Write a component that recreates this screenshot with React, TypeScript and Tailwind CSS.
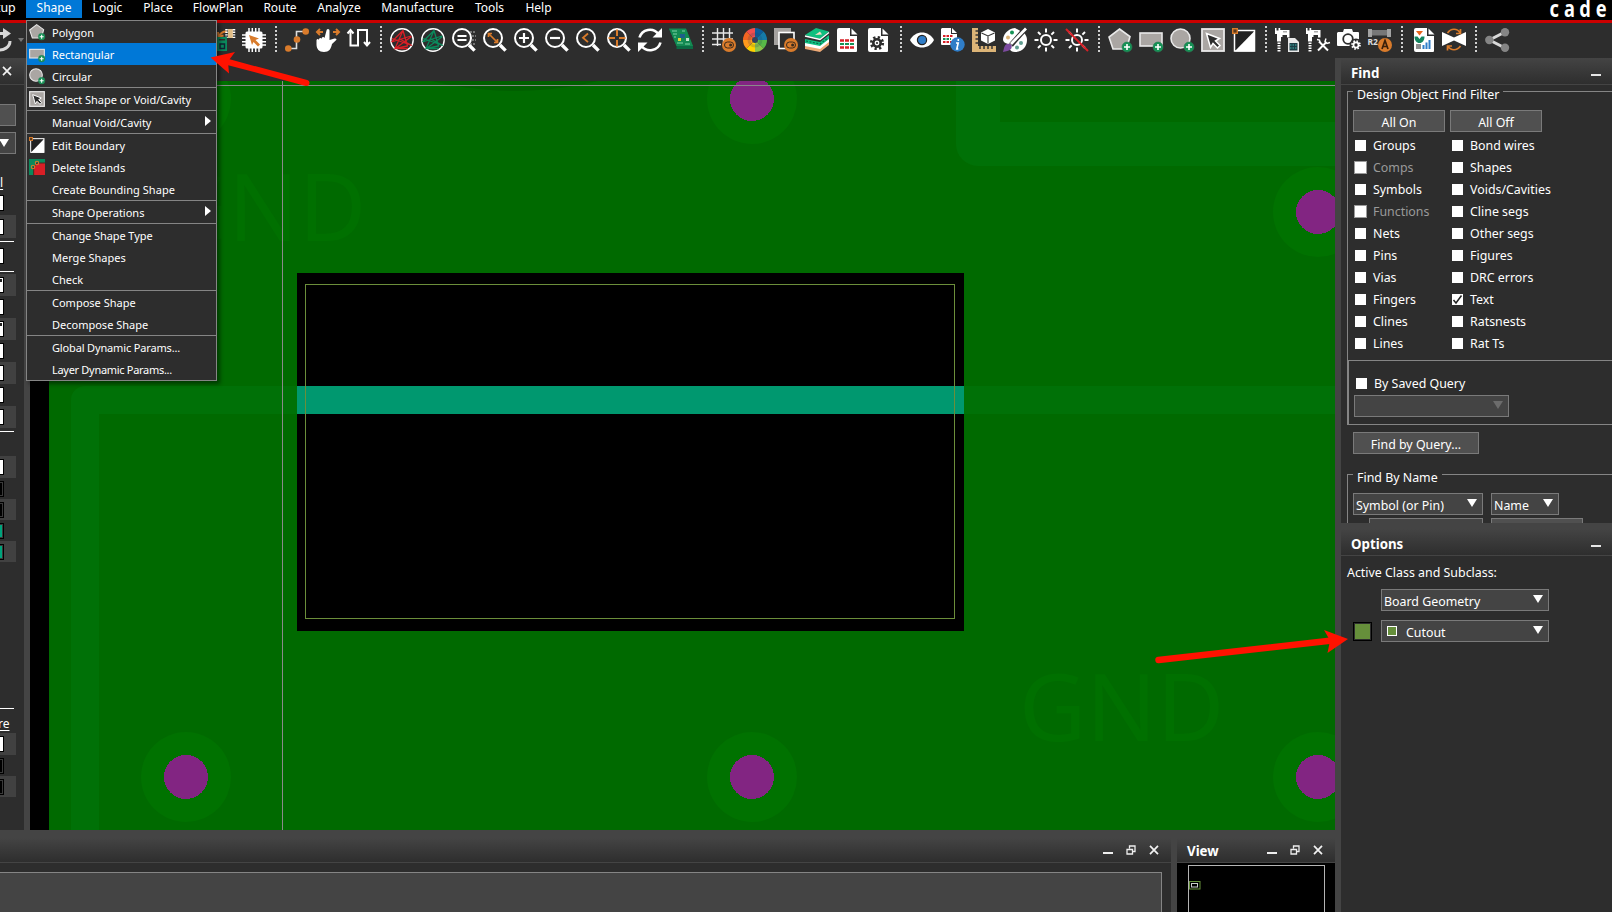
import type { ReactNode } from "react";

/* ---------- toolbar drawings, all on a 24 x 24 grid ---------- */

const Plus = () => (
  <g>
    <circle cx="19" cy="19" r="5" fill="#149255" stroke="#2d7a55" strokeWidth="0.6" />
    <path d="M19 16v6M16 19h6" stroke="#fff" strokeWidth="1.6" fill="none" />
  </g>
);

const Lens = ({ children }: { children?: ReactNode }) => (
  <g fill="none">
    <circle cx="10" cy="10" r="9" stroke="#fff" strokeWidth="2" />
    <path d="M17 17l5.6 5.6" stroke="#fff" strokeWidth="3.4" />
    {children}
  </g>
);

const Ratsnest = ({ color }: { color: string }) => (
  <g fill="none">
    <circle cx="12" cy="12" r="11.2" stroke="#fff" strokeWidth="1.4" />
    <path d="M1.5 14L13 2.5 17.5 18 5 20.5 13 2.5M2 10.5l20 7M1.5 14L21 8M6 20L21.5 8.5M9 10.5l12 6.5M5 20.5h13" stroke={color} strokeWidth="1.3" />
  </g>
);

const Sun = () => (
  <g fill="none" stroke="#fff" strokeWidth="2">
    <circle cx="12" cy="12" r="5" />
    <path d="M12 .5v4M12 19.5v4M.5 12h4M19.5 12h4M4 4l2.6 2.6M17.4 17.4L20 20M4 20l2.6-2.6M17.4 6.6L20 4" />
  </g>
);

const Toggle = () => (
  <g>
    <circle cx="17" cy="17" r="7" fill="#d97b2b" />
    <rect x="12.5" y="14" width="9" height="6" rx="3" fill="none" stroke="#3a2a1c" strokeWidth="1" />
    <circle cx="18.6" cy="17" r="1.5" fill="#3a2a1c" />
  </g>
);

const Page = () => (
  <g>
    <path d="M3 0h11v8h7v15a1 1 0 0 1-1 1H3a2 2 0 0 1-2-2V2a2 2 0 0 1 2-2z" fill="#fff" />
    <path d="M15.500 0.5v6h6z" fill="#fff" />
  </g>
);

const Caliper = () => (
  <g>
    <path d="M0 0h1.500v2.500h2V0h1.700v2h9.300v7.500H12V7H7.500v2H6v4.500H2V6H0z" fill="#fff" />
    <path d="M4 14.500v9.500" stroke="#fff" strokeWidth="3" strokeDasharray="1.500 1" />
    <path d="M9 3v1.500M11 3v1.500" stroke="#555" strokeWidth="1" />
  </g>
);

const Cog = ({ x, y, s, color, hole }: { x: number; y: number; s: number; color: string; hole: string }) => (
  <g transform={`translate(${x} ${y}) scale(${s})`}>
    <circle r="5.600" fill="none" stroke={color} strokeWidth="3" strokeDasharray="2.2 2.2" />
    <circle r="5" fill={color} />
    <circle r="2.400" fill={hole} />
  </g>
);

const polygonIcon = (
  <g>
    <path d="M11.500 1L22 8.500 18.500 21H5L1 9z" fill="#aaa6a3" stroke="#e9e9e9" strokeWidth="1.600" />
    <Plus />
  </g>
);
const rectIcon = (
  <g>
    <rect x="1" y="5" width="22" height="13" fill="#aaa6a3" stroke="#e9e9e9" strokeWidth="1.600" />
    <Plus />
  </g>
);
const circleIcon = (
  <g>
    <circle cx="10.500" cy="10.500" r="9.500" fill="#aaa6a3" stroke="#e9e9e9" strokeWidth="1.600" />
    <Plus />
  </g>
);
const selectIcon = (
  <g>
    <rect x="1" y="1" width="22" height="22" fill="#aaa6a3" stroke="#e9e9e9" strokeWidth="1.800" />
    <path d="M5.500 5.500l13 5-4 2.500 4.500 4.500-2.500 2.500-4.500-4.500-2.500 4z" fill="#2d2d2d" stroke="#fff" strokeWidth="1.500" />
  </g>
);
const boundaryIcon = (
  <g>
    <rect x="2.500" y="2.500" width="20" height="20.500" fill="#222" stroke="#fff" strokeWidth="1.500" />
    <path d="M22.500 3v20.500H2.500z" fill="#fff" />
    <rect x="0.700" y="0.700" width="4.600" height="4.600" fill="#5a3a1c" stroke="#d97b2b" strokeWidth="1.400" />
  </g>
);
const islandIcon = (
  <g>
    <rect width="24" height="24" fill="#0a8a5c" />
    <path d="M7 24V12l5-6h12v18z" fill="#d81f26" />
    <path d="M7 24V12l5-6h12" fill="none" stroke="#4a2a20" strokeWidth="1.500" />
    <circle cx="6" cy="12" r="2.600" fill="none" stroke="#d97b2b" strokeWidth="1.600" />
    <circle cx="12" cy="6" r="2.600" fill="none" stroke="#d97b2b" strokeWidth="1.600" />
  </g>
);

const icons: (ReactNode | null)[] = [
  <g>
    <path d="M16 3.500c-4-.5-6 1-7.500 4M7 4l.5 4.500 5-1" fill="none" stroke="#d97b2b" strokeWidth="2" />
    <rect x="17" y="1" width="5" height="9" fill="#e0bd88" />
    <path d="M15.500 1v9M23 1v9" stroke="#fff" strokeWidth="2.500" strokeDasharray="1.400 1.200" />
    <path d="M7 13.500V10h8v3.500" fill="none" stroke="#0a8a5c" strokeWidth="1.800" />
    <rect x="5" y="12.500" width="11" height="10.500" fill="#0a8a5c" />
    <path d="M9 20.500v-4.500h4.500v4.500z" fill="none" stroke="#123" strokeWidth="1.400" />
  </g>,
  <g>
    <rect x="3.500" y="3.500" width="17" height="17" rx="1.500" fill="#fff" />
    <path d="M7 0v24M10.300 0v24M13.700 0v24M17 0v24M0 7h24M0 10.300h24M0 13.700h24M0 17h24" stroke="#fff" strokeWidth="1.500" />
    <path d="M7 7l10 3.500-3.500 1.500 4.500 4.500-2 2-4.500-4.500L10 17z" fill="#d97b2b" />
  </g>,
  null,
  <g>
    <path d="M3 20.500h8.500v-17H21" fill="none" stroke="#ddd" strokeWidth="1.600" />
    <circle cx="3.300" cy="20.500" r="3.300" fill="#d97b2b" />
    <circle cx="12" cy="11.500" r="3.300" fill="#d97b2b" />
    <circle cx="20.700" cy="3.500" r="3.300" fill="#d97b2b" />
  </g>,
  <g>
    <path d="M4 1L1 4l3 3M1 4h6M20 1l3 3-3 3M23 4h-6" fill="none" stroke="#d97b2b" strokeWidth="2" />
    <path d="M10.500 2.500a1.500 1.500 0 0 1 3 0V12l5-1.500c2-.4 2.500 1 1.500 1.800L16 16c-1 5-3 8-8 8-5 0-7.500-3-7.500-7.500V12c.5-1.500 2-1.500 2.500 0V11c.5-1.500 2.300-1.500 2.700 0V10c.6-1.500 2.300-1.500 2.800 0z" fill="#fff" />
  </g>,
  <g fill="none" stroke="#fff" strokeWidth="2">
    <path d="M3.500 3v14.500H11V2h9v15" />
    <path d="M.5 5.500l3-3.500 3 3.500M17 14l3 3.500 3-3.500" />
  </g>,
  null,
  <Ratsnest color="#d81f26" />,
  <Ratsnest color="#0a8a5c" />,
  <Lens>
    <path d="M5.500 8h9M5.500 12h9" stroke="#fff" strokeWidth="2" />
    <path d="M18 4h6M20 8h4M20 12h4M18 16h6" stroke="#bbb" strokeWidth="1.200" strokeDasharray="2 1" />
  </Lens>,
  <Lens>
    <path d="M5.500 9V5.500H9M5.500 5.500l9 9M14.500 11v3.500H11" stroke="#d97b2b" strokeWidth="1.700" />
  </Lens>,
  <Lens>
    <path d="M5 10h10M10 5v10" stroke="#fff" strokeWidth="2.200" />
  </Lens>,
  <Lens>
    <path d="M5 10h10" stroke="#fff" strokeWidth="2.200" />
  </Lens>,
  <Lens>
    <path d="M12 5.500L7 9.800l5 4.300" stroke="#d97b2b" strokeWidth="1.800" />
  </Lens>,
  <Lens>
    <path d="M10 1.500v6.500M10 12v6.500M1.500 10H8M12 10h6.500" stroke="#d97b2b" strokeWidth="2" />
  </Lens>,
  <g fill="none" stroke="#fff" strokeWidth="2.600">
    <path d="M1.500 9.500C4 1 15 -1 20.500 6M22.500 14.500C20 23 9 25 3.500 18" />
    <path d="M24 0v9.500h-9.500zM0 24v-9.500h9.500z" fill="#fff" stroke="none" />
  </g>,
  <g>
    <path d="M0 1h17l7 17.500v2.500H7.500V18z" fill="#0b6b43" />
    <path d="M0 .5h17l7 17.500H7.500z" fill="#138a52" />
    <path d="M3 3h5M4 6h4M13 3h3M8 15h6M16 16h5M5 9h2" stroke="#7fd3a6" strokeWidth="1.200" />
    <rect x="11" y="6" width="5" height="4" fill="#1d5f8a" />
    <rect x="9" y="10" width="3" height="3" fill="#e2d23a" />
    <rect x="17" y="10" width="3" height="3" fill="#bfe3c9" />
  </g>,
  null,
  <g>
    <path d="M5.500 0v18M11.500 0v18M17.500 0v10M0 5h21M0 11h21M0 16.500h9" stroke="#e8e8e8" strokeWidth="1.400" />
    <Toggle />
  </g>,
  <g strokeWidth="12" fill="none">
    {["#0a5c9c", "#157aa8", "#58b947", "#8bc34a", "#ffd200", "#ff9a1c", "#f26522", "#f04e4e"].map((c, i) => (
      <path key={c} d="M12 12L12 0A12 12 0 0 1 20.500 3.500z" fill={c} stroke="none" transform={`rotate(${i * 45} 12 12)`} />
    ))}
    <circle cx="12" cy="12" r="6" fill="none" stroke="#24405f" strokeOpacity="0.2" strokeWidth="3" />
    <circle cx="12" cy="12" r="3" fill="#33415a" />
  </g>,
  <g>
    <rect width="17" height="17" fill="#a5a2a0" />
    <rect x="5" y="4.500" width="15" height="16" fill="#2d2d2d" stroke="#fff" strokeWidth="1.600" />
    <Toggle />
  </g>,
  <g>
    <path d="M0 17L15 19 24 13v4l-9 7-15-3z" fill="#eda976" />
    <path d="M0 14l15 3 9-7v4l-9 7-15-3z" fill="#fff" />
    <path d="M0 11l15 3 9-7v4l-9 7-15-3z" fill="#12c184" />
    <path d="M1 13l14 3 8-6" fill="none" stroke="#0a6b48" strokeWidth="1.200" strokeDasharray="2 1.500" />
    <path d="M0 7L11 0l13 3.500-9 7.500z" fill="#0fbf7f" />
    <path d="M10 7l5-3.500 2 3z" fill="#f3d9c0" />
    <path d="M0 8l15 3.500L24 4.500" fill="none" stroke="#fff" strokeWidth="1.300" />
  </g>,
  <g>
    <Page />
    <path d="M4 12.500h14M4 19.500h14" stroke="#d81f26" strokeWidth="2.400" strokeDasharray="4 1" />
    <path d="M4 16h14" stroke="#149255" strokeWidth="2.200" strokeDasharray="4 1" />
  </g>,
  <g>
    <Page />
    <Cog x={10} y={15} s={1} color="#2d2d2d" hole="#fff" />
    <circle cx="10" cy="15" r="1.100" fill="#2d2d2d" />
  </g>,
  null,
  <g>
    <path d="M0 12C5 2 19 2 24 12 19 22 5 22 0 12z" fill="#fff" />
    <circle cx="12" cy="12" r="4.600" fill="#2f7dc8" stroke="#222" strokeWidth="1.200" />
  </g>,
  <g>
    <path d="M1 0h9v6h6v11H1a1 1 0 0 1-1-1V1z M11 0l5 5h-5z" fill="#fff" />
    <path d="M2 8h10M2 14h10" stroke="#d81f26" strokeWidth="1.800" strokeDasharray="2.500 1" />
    <path d="M2 11h8" stroke="#149255" strokeWidth="1.800" strokeDasharray="2.500 1" />
    <circle cx="16.500" cy="16.500" r="7.200" fill="#2f7dc8" />
    <path d="M15 15h2.200l-1.400 6h1.500M17.300 11v2" stroke="#fff" strokeWidth="1.600" fill="none" />
  </g>,
  <g>
    <path d="M0 0h6v18h18v6H0z" fill="#dcb477" />
    <path d="M3.500 3h2.500M3.500 7h2.500M3.500 11h2.500M3.500 15h2.500M8 18v3M12 18v3M16 18v3M20 18v3" stroke="#333" strokeWidth="1.500" />
    <path d="M16 1l7 3.500v8L16 16l-7-3.500v-8z" fill="#fff" />
    <path d="M9.500 5L16 8l6.500-3M16 8v7.500" stroke="#333" strokeWidth="1.100" fill="none" />
  </g>,
  <g>
    <path d="M12 0C4 1 0 7 0 12c1 4 5 3 6 5 1 3 0 7 6 7 8 0 12-6 12-12 0-3-1-5-3-7z" fill="#fff" />
    <circle cx="9" cy="4.500" r="2" fill="#149255" />
    <circle cx="5" cy="9.500" r="2" fill="#dcb477" />
    <circle cx="18" cy="15" r="2" fill="#5e9c8f" />
    <circle cx="14" cy="19.500" r="2" fill="#5e9c8f" />
    <path d="M23 0L8 17" stroke="#2d2d2d" strokeWidth="5" />
    <path d="M23 .5L8 16" stroke="#fff" strokeWidth="2.800" />
    <path d="M4 16c4-1 6 2 4 5-2 2-5 2-8 3 1-3 1-7 4-8z" fill="#7c4ba0" />
  </g>,
  <Sun />,
  <g>
    <Sun />
    <path d="M1 1l22 22" stroke="#d81f26" strokeWidth="2" />
  </g>,
  null,
  polygonIcon,
  rectIcon,
  circleIcon,
  selectIcon,
  boundaryIcon,
  null,
  <g>
    <Caliper />
    <path d="M13 10h7l4 4v10H13z" fill="#e9e9e9" />
    <rect x="14.500" y="15" width="8" height="7.500" fill="#1c3c44" />
    <path d="M15 17h7M15 20h7" stroke="#3fb0a8" strokeWidth="1" strokeDasharray="1.500 1" />
  </g>,
  <g>
    <Caliper />
    <path d="M13 13.500l9 9M20.500 14L12 22.500" stroke="#fff" strokeWidth="2" />
    <path d="M20 10.500l-1 3 2 2 3-1M11 11.500l2.500.5.500 2.500" fill="none" stroke="#fff" strokeWidth="1.400" />
  </g>,
  <g>
    <path d="M1 4h5l1-3h8l1 3h5a1 1 0 0 1 1 1v13H1a1 1 0 0 1-1-1V5z" fill="#fff" />
    <circle cx="11" cy="11" r="4.800" fill="#fff" stroke="#2d2d2d" strokeWidth="1.800" />
    <circle cx="19" cy="17" r="6.500" fill="#2d2d2d" />
    <Cog x={19} y={17} s={0.68} color="#fff" hole="#2d2d2d" />
  </g>,
  <g>
    <rect x="4" y="2" width="15" height="5.500" fill="#777" />
    <path d="M0 1h4v8H0zM19 1h4v8h-4z" fill="#a3a3a3" />
    <text x="-0.500" y="17" fill="#ddd" fontSize="8.500" fontWeight="700" fontFamily="Noto Sans">R2</text>
    <circle cx="17" cy="17" r="7" fill="#d97b2b" />
    <path d="M14 21l3-8.500 3 8.500M15 18.500h4" fill="none" stroke="#3a1f0a" strokeWidth="1.700" />
  </g>,
  null,
  <g transform="translate(2 0)">
    <Page />
    <path d="M3 3h7l-3.500 4.500z" fill="#e8641b" />
    <path d="M1.500 8.500h3l2 2.500 2-2.500h3c0 4-2 6.500-5 6.500s-5-2.500-5-6.500z" fill="#14855f" />
    <rect x="3" y="16" width="5" height="5" fill="#8d8d8d" />
    <path d="M10.500 21v-4M13.500 21v-6.500M16.500 21v-9" stroke="#2f7dc8" strokeWidth="2" />
  </g>,
  <g>
    <path d="M0 4l12 5.500L24 4v14l-12-5.500L0 18z" fill="#fff" />
    <path d="M5.500 5C9 0 15 0 18.500 5M18.500 1v4.500h-4.500M18.500 18c-3.500 5-9.500 5-13 0M5.500 22.500V18H10" fill="none" stroke="#d97b2b" strokeWidth="1.700" />
  </g>,
  null,
  <g>
    <path d="M20 4L4.500 12 20 20" fill="none" stroke="#d9d9d9" strokeWidth="3" />
    <circle cx="4.300" cy="12" r="4.200" fill="#858585" />
    <circle cx="20" cy="4.200" r="4.200" fill="#858585" />
    <circle cx="20" cy="19.800" r="4.200" fill="#858585" />
  </g>,
];

const Icon = ({ children, className = "size-6" }: { children: ReactNode; className?: string }) => (
  <svg viewBox="0 0 24 24" className={`${className} block shrink-0 overflow-visible`}>
    {children}
  </svg>
);

const Toolbar = () => (
  <div className="flex h-[35px] shrink-0 items-start bg-[#2d2d2d] pt-[5px]">
    <Icon className="-ml-[13px] size-6">
      <g fill="none" stroke="#d8d8d8" strokeWidth="3">
        <path d="M8 5.500h10M23 13c0 6-6 10-14 9" />
        <path d="M16 0v11l8-5.500z" fill="#d8d8d8" stroke="none" />
      </g>
    </Icon>
    <div className="mt-[10px] ml-[7px] border-x-[3px] border-t-4 border-x-transparent border-t-[#777]" />
    <div className="ml-[187px] flex gap-[7px]">
      {icons.map((d, i) =>
        d ? (
          <Icon key={i}>{d}</Icon>
        ) : (
          <div key={i} className="-mt-[2px] flex w-[5px] flex-col items-center gap-[2px]">
            {[0, 1, 2, 3, 4, 5, 6].map((n) => (
              <div key={n} className="size-[2px] bg-[#cfcfcf]" />
            ))}
          </div>
        ),
      )}
    </div>
  </div>
);

/* ---------- menu bar and drop-down ---------- */

const menus: [string, string][] = [
  ["Logic", "w-[51px]"],
  ["Place", "w-[50px]"],
  ["FlowPlan", "w-[70px]"],
  ["Route", "w-[54px]"],
  ["Analyze", "w-[64px]"],
  ["Manufacture", "w-[93px]"],
  ["Tools", "w-[51px]"],
  ["Help", "w-[47px]"],
];

const MenuBar = () => (
  <div className="flex h-[23px] shrink-0 items-start overflow-hidden border-b-[3px] border-[#cc0000] bg-black text-[12px] leading-[16px]">
    <div className="-ml-[11px] w-[37px] text-[12.400px]">etup</div>
    <div className="h-[18px] w-[56px] bg-[#0078d7] text-center">Shape</div>
    {menus.map(([m, w]) => (
      <div key={m} className={`${w} text-center`}>
        {m}
      </div>
    ))}
    <svg className="ml-auto block h-5 w-[64px]">
      <g transform="scale(.76 1)">
        <text x="2 21 41 63" y="16.500" fill="#fff" fontSize="24" fontWeight="700" fontFamily="Noto Sans">
          cade
        </text>
      </g>
    </svg>
  </div>
);

type Item = { t: string; icon?: ReactNode; on?: boolean; sub?: boolean; track?: string };
const groups: Item[][] = [
  [{ t: "Polygon", icon: polygonIcon }, { t: "Rectangular", icon: rectIcon, on: true }, { t: "Circular", icon: circleIcon }],
  [{ t: "Select Shape or Void/Cavity", icon: selectIcon, track: "tracking-[-0.04px]" }],
  [{ t: "Manual Void/Cavity", sub: true }],
  [{ t: "Edit Boundary", icon: boundaryIcon }, { t: "Delete Islands", icon: islandIcon }, { t: "Create Bounding Shape", track: "tracking-[0.04px]" }],
  [{ t: "Shape Operations", sub: true }],
  [{ t: "Change Shape Type", track: "tracking-[-0.08px]" }, { t: "Merge Shapes" }, { t: "Check" }],
  [{ t: "Compose Shape" }, { t: "Decompose Shape" }],
  [{ t: "Global Dynamic Params...", track: "tracking-[-0.15px]" }, { t: "Layer Dynamic Params...", track: "tracking-[-0.3px]" }],
];

const ShapeMenu = () => (
  <div className="absolute top-5 left-[26px] w-[191px] divide-y divide-[#858585] border border-[#858585] bg-[#2d2d2d] text-[11px] shadow-[3px_3px_4px_rgba(0,0,0,0.45)]">
    {groups.map((g, i) => (
      <div key={i}>
        {g.map((it) => (
          <div key={it.t} className={`flex h-[22px] items-center pr-[5px] pl-[2px] ${it.on ? "bg-[#0078d7]" : ""}`}>
            <div className="w-[23px]">{it.icon && <Icon className="size-4">{it.icon}</Icon>}</div>
            <div className={`flex-1 pt-[2px] leading-5 whitespace-nowrap ${it.track ?? ""}`}>{it.t}</div>
            {it.sub && <div className="-mt-[2px] border-y-[5px] border-l-[6px] border-y-transparent border-l-white" />}
          </div>
        ))}
      </div>
    ))}
  </div>
);

/* ---------- left visibility panel ---------- */

type Cell = "white" | "check" | "black" | "teal";
const Row = ({ h, shade, kind }: { h: string; shade?: boolean; kind: Cell }) => (
  <div className={`${h} flex w-4 items-center ${shade ? "bg-[#414141]" : ""}`}>
    {kind === "white" || kind === "check" ? (
      <div className="h-4 w-1 border border-l-0 border-black bg-white">
        {kind === "check" && <div className="mt-px ml-0 h-[3px] w-[2px] bg-[#222]" />}
      </div>
    ) : (
      <div className="h-4 w-1 border border-l-0 border-black bg-[#3a3a3a] py-px pr-px">
        <div className={`h-full w-full ${kind === "teal" ? "bg-[#00a37c]" : "bg-black"}`} />
      </div>
    )}
  </div>
);
const Rule = () => (
  <div className="flex h-[6px] items-center">
    <div className="h-px w-[14px] bg-white" />
  </div>
);

const XMark = () => (
  <svg viewBox="0 0 10 10" className="block size-[10px]">
    <path d="M1 .8l8 8.400M9 .8L1 9.200" stroke="#f2f2f2" strokeWidth="1.700" fill="none" />
  </svg>
);

const LeftPanel = () => (
  <div className="h-[772px] w-[30px] shrink-0 overflow-hidden border-r-[6px] border-[#444] bg-[#2d2d2d]">
    <div className="flex h-[27px] items-center border-b border-[#444] bg-linear-to-b from-[#444] to-[#2e2e2e] pl-[2px]">
      <XMark />
    </div>
    <div className="mt-[19px] h-[22px] w-4 border border-l-0 border-[#777] bg-[#505050]" />
    <div className="mt-[6px] flex h-[22px] w-4 items-center border border-l-0 border-[#777] bg-[#444]">
      <div className="-ml-px border-x-[5.500px] border-t-8 border-x-transparent border-t-white" />
    </div>
    <div className="mt-[17px] h-5 overflow-hidden text-[12px] leading-[23px] underline underline-offset-2">l</div>
    <Row h="h-6" kind="white" />
    <Row h="h-[23px]" shade kind="white" />
    <Rule />
    <Row h="h-6" kind="white" />
    <Rule />
    <Row h="h-[22px]" shade kind="check" />
    <Row h="h-[22px]" kind="white" />
    <Row h="h-[22px]" shade kind="check" />
    <Row h="h-[22px]" kind="white" />
    <Row h="h-[22px]" shade kind="white" />
    <Row h="h-[22px]" kind="white" />
    <Row h="h-[22px]" shade kind="white" />
    <Rule />
    <div className="h-[22px]" />
    <Row h="h-[22px]" shade kind="white" />
    <Row h="h-[21px]" kind="black" />
    <Row h="h-[21px]" shade kind="black" />
    <Row h="h-[21px]" kind="teal" />
    <Row h="h-[21px]" shade kind="teal" />
    <div className="h-[143px]" />
    <Rule />
    <div className="-ml-[2px] h-[22px] text-[12px] leading-[26px] underline underline-offset-2">re</div>
    <Row h="h-[22px]" shade kind="white" />
    <Row h="h-[21px]" kind="black" />
    <Row h="h-[21px]" shade kind="black" />
  </div>
);

/* ---------- board drawing ---------- */

const Board = () => (
  <svg viewBox="30 81 1305 749" className="mt-[23px] block h-[749px] w-[1305px] bg-black">
    <rect x="49" y="81" width="1286" height="749" fill="#006a00" />
    <circle cx="515" cy="-259" r="350" fill="#006000" />
    <g fill="none" stroke="#007107" strokeLinejoin="round">
      <path d="M1340 400H85V840" strokeWidth="28" />
      <path d="M1340 144H978V70" strokeWidth="44" />
    </g>
    <g fill="#007200">
      <circle cx="186" cy="99" r="45" />
      <circle cx="752" cy="99" r="45" />
      <circle cx="1318" cy="212" r="45" />
      <circle cx="186" cy="777" r="45" />
      <circle cx="752" cy="777" r="45" />
      <circle cx="1318" cy="777" r="45" />
    </g>
    <g fill="#822582" shapeRendering="crispEdges">
      <circle cx="752" cy="99" r="22" />
      <circle cx="1318" cy="212" r="22" />
      <circle cx="186" cy="777" r="22" />
      <circle cx="752" cy="777" r="22" />
      <circle cx="1318" cy="777" r="22" />
    </g>
    <g fill="#007000" fontSize="92.500" fontFamily="Noto Sans">
      <text x="161" y="241">GND</text>
      <text x="1019" y="740.500">GND</text>
    </g>
    <rect x="297" y="273" width="667" height="358" fill="#000" />
    <rect x="297" y="386" width="667" height="28" fill="#00986f" />
    <rect x="305.500" y="284.500" width="649" height="334" fill="none" stroke="#6b8e3a" />
    <path d="M282.500 81V830M30 85.500H1335" stroke="#8a8a8a" fill="none" />
  </svg>
);

/* ---------- bottom docks ---------- */

const Dock = ({ title, className }: { title?: string; className: string }) => (
  <div className={`${className} flex h-[25px] items-center border-b border-[#444] bg-linear-to-b from-[#444] to-[#2e2e2e]`}>
    {title && <span className="pt-px pl-[10px] text-[13.300px] leading-5 font-bold">{title}</span>}
    <div className="ml-auto flex items-center pb-px">
      <div className="mt-[7px] h-[2px] w-[10px] bg-[#eee]" />
      <svg viewBox="0 0 10 10" className="mr-[13px] ml-[13px] block size-[10px]">
        <path d="M3.500 3.500v-2.500h5.500v5.500H6.500M1 4.500h5.500v4.500H1z" stroke="#eee" strokeWidth="1.300" fill="none" />
      </svg>
      <XMark />
    </div>
  </div>
);

const BottomDocks = () => (
  <div className="flex h-[82px] gap-[6px] bg-[#444] pt-2">
    <div className="flex w-[1171px] flex-col bg-[#2d2d2d]">
      <Dock className="pr-3" />
      <div className="mt-[9px] mr-[9px] flex-1 border-t border-r border-[#858585] bg-[#444]" />
    </div>
    <div className="flex w-[158px] flex-col bg-black">
      <Dock title="View" className="pr-3" />
      <div className="mt-[2px] ml-[11px] w-[137px] flex-1 border border-b-0 border-[#b4b4b4]">
        <svg viewBox="0 0 12 9" className="mt-[15px] block h-[9px] w-3">
          <rect x=".5" y=".5" width="10.500" height="7.500" fill="#000" stroke="#668f3b" />
          <rect x="2.500" y="2.500" width="6" height="3.500" fill="none" stroke="#ccc" />
        </svg>
      </div>
    </div>
  </div>
);

/* ---------- right panel ---------- */

const PanelTitle = ({ title }: { title: string }) => (
  <div className="flex h-[27px] items-center border-b border-[#444] bg-linear-to-b from-[#444] to-[#2e2e2e] pr-[11px] pl-[10px] text-[13.300px] font-bold">
    <span className="pt-[4px] leading-5">{title}</span>
    <div className="mt-[7px] ml-auto h-[2px] w-[10px] bg-[#e6e6e6]" />
  </div>
);

const Check = ({ label, off, on, className = "" }: { label: string; off?: boolean; on?: boolean; className?: string }) => (
  <div className={`flex h-[22px] items-center gap-[6px] ${className}`}>
    <div className={`size-[13px] border bg-white bg-clip-padding ${off ? "border-[#9a9a9a]" : "border-transparent"}`}>
      {on && (
        <svg viewBox="0 0 11 11" className="block size-[11px]">
          <path d="M1.500 6l2.500 3L9.500 1.500" fill="none" stroke="#222" strokeWidth="1.500" />
        </svg>
      )}
    </div>
    <span className={`pt-[2px] leading-5 ${off ? "text-[#9a9a9a]" : ""}`}>{label}</span>
  </div>
);

const Button = ({ children, className }: { children: ReactNode; className: string }) => (
  <div className={`${className} flex h-[22px] items-center justify-center border border-[#7a7a7a] bg-[#505050] pt-[4px] leading-4`}>{children}</div>
);

const Combo = ({ children, className, dim }: { children?: ReactNode; className: string; dim?: boolean }) => (
  <div className={`${className} flex h-[22px] items-center border border-[#7a7a7a] bg-[#444] pr-[5px] pl-[2px]`}>
    <div className="flex items-center pt-[4px] leading-4">{children}</div>
    <div className={`-mt-[2px] ml-auto border-x-[5.500px] border-t-8 border-x-transparent ${dim ? "border-t-[#6c6c6c]" : "border-t-white"}`} />
  </div>
);

const Legend = ({ text }: { text: string }) => (
  <div className="-ml-px flex h-[10px] items-start">
    <div className="h-px w-[6px] bg-[#858585]" />
    <span className="-mt-[6px] pr-1 pl-1 leading-5">{text}</span>
    <div className="h-px flex-1 bg-[#858585]" />
  </div>
);

const leftFilters = ["Groups", "Comps", "Symbols", "Functions", "Nets", "Pins", "Vias", "Fingers", "Clines", "Lines"];
const rightFilters = ["Bond wires", "Shapes", "Voids/Cavities", "Cline segs", "Other segs", "Figures", "DRC errors", "Text", "Ratsnests", "Rat Ts"];

const RightPanel = () => (
  <div className="h-[854px] w-[277px] shrink-0 overflow-hidden border-l-[6px] border-[#444] bg-[#2d2d2d] text-[12.400px] whitespace-nowrap">
    <PanelTitle title="Find" />
    <div className="h-[438px] overflow-hidden pt-[6px] pl-[6px]">
      <div className="h-[334px] border-l border-[#858585]">
        <Legend text="Design Object Find Filter" />
        <div className="mt-[9px] ml-[5px] flex gap-[5px]">
          <Button className="w-[92px]">All On</Button>
          <Button className="w-[92px]">All Off</Button>
        </div>
        <div className="mt-[2px] ml-[6px] flex">
          <div className="w-[97px]">
            {leftFilters.map((l) => (
              <Check key={l} label={l} off={l === "Comps" || l === "Functions"} />
            ))}
          </div>
          <div>
            {rightFilters.map((l) => (
              <Check key={l} label={l} on={l === "Text"} />
            ))}
          </div>
        </div>
        <div className="mt-[6px] h-[65px] border border-r-0 border-[#858585] pt-[11px]">
          <Check label="By Saved Query" className="ml-[6px]" />
          <Combo className="mt-[1px] ml-[5px] w-[155px]" dim />
        </div>
      </div>
      <Button className="mt-[7px] ml-[6px] w-[126px]">Find by Query...</Button>
      <div className="mt-5 h-[60px] border-l border-[#858585]">
        <Legend text="Find By Name" />
        <div className="mt-[9px] ml-[5px] flex gap-2">
          <Combo className="w-[130px]">Symbol (or Pin)</Combo>
          <Combo className="w-[68px]">Name</Combo>
        </div>
        <div className="mt-[3px] ml-[21px] flex gap-2">
          <div className="h-[22px] w-[114px] border border-[#7a7a7a] bg-[#444]" />
          <div className="h-[22px] w-[92px] border border-[#7a7a7a] bg-[#505050]" />
        </div>
      </div>
    </div>
    <div className="h-[6px] bg-[#444]" />
    <PanelTitle title="Options" />
    <div className="pt-[7px] pl-[6px] leading-5">Active Class and Subclass:</div>
    <Combo className="mt-[6px] ml-10 w-[168px]">Board Geometry</Combo>
    <div className="mt-[9px] ml-3 flex items-center gap-[9px]">
      <div className="size-[19px] border border-black bg-[#668f3b] shadow-[inset_0_0_0_1px_#2d2d2d]" />
      <Combo className="w-[168px]">
        <span className="-mt-[4px] mr-[9px] ml-[3px] size-[10px] border border-white bg-[#668f3b]" />
        Cutout
      </Combo>
    </div>
  </div>
);

const Arrows = () => (
  <svg viewBox="0 0 1612 912" className="pointer-events-none absolute inset-0 h-[912px] w-[1612px]" fill="#ff1200" stroke="#ff1200">
    <path d="M306.500 83L228 62" strokeWidth="6" strokeLinecap="round" />
    <path d="M210.500 57.500L235 52l-7 9.500 1 12z" stroke="none" />
    <path d="M1158.500 660L1332 640.500" strokeWidth="6.500" strokeLinecap="round" />
    <path d="M1348 639l-24-9 6 10.500-2.500 12.500z" stroke="none" />
  </svg>
);

export default function App() {
  return (
    <div className="relative flex h-[912px] w-[1612px] flex-col overflow-hidden bg-[#2d2d2d] font-['Noto_Sans',sans-serif] text-white">
      <MenuBar />
      <Toolbar />
      <div className="flex h-[854px]">
        <div className="w-[1335px] shrink-0">
          <div className="flex">
            <LeftPanel />
            <Board />
          </div>
          <BottomDocks />
        </div>
        <RightPanel />
      </div>
      <ShapeMenu />
      <Arrows />
    </div>
  );
}
